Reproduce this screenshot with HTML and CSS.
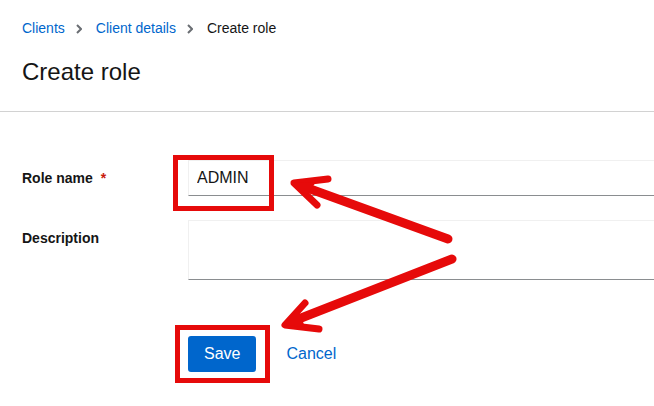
FILE: index.html
```html
<!DOCTYPE html>
<html lang="en">
<head>
<meta charset="utf-8">
<title>Create role</title>
<link rel="stylesheet" href="styles.css">
</head>
<body>
<div class="page">
  <header class="page-header">
    <nav class="breadcrumb">
      <a class="crumb-link" href="#">Clients</a>
      <svg class="chevron" viewBox="0 0 6 10" width="6" height="10"><path d="M1 1 L5 5 L1 9" fill="none" stroke="#6a6e73" stroke-width="2"/></svg>
      <a class="crumb-link" href="#">Client details</a>
      <svg class="chevron" viewBox="0 0 6 10" width="6" height="10"><path d="M1 1 L5 5 L1 9" fill="none" stroke="#6a6e73" stroke-width="2"/></svg>
      <span class="crumb-current">Create role</span>
    </nav>
    <h1 class="title">Create role</h1>
  </header>
  <main class="form-area">
    <form class="form">
      <div class="form-row">
        <label class="label">Role name <span class="req">*</span></label>
        <input class="input" type="text" value="ADMIN">
      </div>
      <div class="form-row">
        <label class="label">Description</label>
        <textarea class="textarea"></textarea>
      </div>
      <div class="actions">
        <button class="btn-primary" type="button">Save</button>
        <button class="btn-link" type="button">Cancel</button>
      </div>
    </form>
  </main>
  <svg class="annotations" viewBox="0 0 654 406" width="654" height="406">
    <g fill="none" stroke="#e60a0a" stroke-width="5">
      <rect x="175.5" y="157.5" width="96" height="51"/>
      <rect x="177.5" y="327.5" width="90" height="53"/>
    </g>
    <g fill="none" stroke="#e60a0a" stroke-linecap="round" stroke-linejoin="round">
      <line x1="448" y1="239" x2="302" y2="186" stroke-width="9"/>
      <polyline points="328,179 294,183 317,205" stroke-width="7"/>
      <line x1="452" y1="259" x2="296" y2="320" stroke-width="9"/>
      <polyline points="305,303 285,325 319,329" stroke-width="7"/>
    </g>
    <g fill="#e60a0a">
      <polygon points="293,183 316,182 306,196"/>
      <polygon points="284,325 298,309 305,327"/>
    </g>
  </svg>
</div>
</body>
</html>
```
FILE: styles.css
```css
* { box-sizing: border-box; }
html, body { margin: 0; padding: 0; background: #fff; }
body {
  font-family: "Liberation Sans", Arial, sans-serif;
  color: #151515;
  width: 654px;
  height: 406px;
  overflow: hidden;
}
.page { position: relative; width: 654px; height: 406px; }
.page-header {
  padding: 18px 22px 24px;
  border-bottom: 1px solid #d2d2d2;
}
.breadcrumb {
  display: flex;
  align-items: center;
  font-size: 14px;
  line-height: 21px;
}
.crumb-link { color: #0066cc; text-decoration: none; }
.crumb-current { color: #151515; }
.chevron { margin: 0 14px 0 11px; }
.title {
  margin: 17px 0 0;
  font-size: 24px;
  font-weight: 400;
  line-height: 31px;
}
.form-area { padding: 48px 0 0 22px; }
.form { display: flex; flex-direction: column; gap: 24px; }
.form-row { display: flex; align-items: flex-start; }
.label {
  width: 166px;
  flex: none;
  padding-top: 8px;
  font-size: 14px;
  font-weight: 700;
  line-height: 21px;
}
.req { color: #c9190b; margin-left: 4px; }
.input, .textarea {
  flex: 1;
  font-family: inherit;
  font-size: 16px;
  color: #151515;
  background: #fff;
  border: 1px solid #f0f0f0;
  border-bottom-color: #8a8d90;
  border-right: none;
  outline: none;
}
.input { height: 36px; padding: 0 8px; }
.textarea { height: 60px; resize: none; padding: 6px 8px; }
.actions {
  display: flex;
  align-items: center;
  gap: 14px;
  margin-top: 32px;
  padding-left: 166px;
}
.btn-primary {
  height: 36px;
  padding: 0 16px;
  border: none;
  border-radius: 3px;
  background: #0066cc;
  color: #fff;
  font-family: inherit;
  font-size: 16px;
}
.btn-link {
  height: 36px;
  padding: 0 16px;
  border: none;
  background: none;
  color: #0066cc;
  font-family: inherit;
  font-size: 16px;
}
.annotations { position: absolute; top: 0; left: 0; pointer-events: none; }
```
